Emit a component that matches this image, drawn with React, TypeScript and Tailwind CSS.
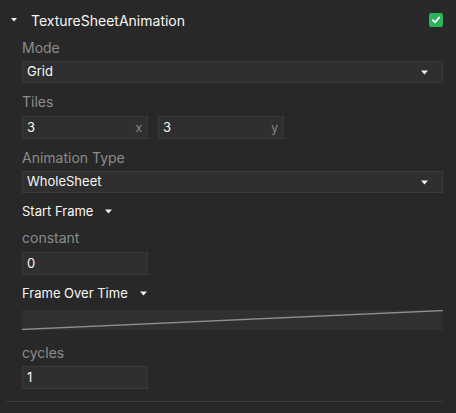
import React from "react";

const font = { fontFamily: "Inter, 'Liberation Sans', sans-serif" };

function Caret({ className = "" }: { className?: string }) {
  return (
    <svg width="7" height="5" viewBox="0 0 7 5" className={className}>
      <path d="M0 0.5 H7 L3.5 4.5 Z" fill="#f2f2f2" />
    </svg>
  );
}

function Label({ children, className = "" }: { children: React.ReactNode; className?: string }) {
  return <div className={`h-[17px] text-[14px] leading-[17px] text-[#8c8c8c] ${className}`}>{children}</div>;
}

function Select({ value, className = "" }: { value: string; className?: string }) {
  return (
    <div
      className={`flex h-[22px] w-[421px] items-center justify-between border border-[#3a3a3a] bg-[#2f2f2f] pl-[4px] pr-[14px] ${className}`}
    >
      <span className="text-[13px] text-[#f7f7f7]">{value}</span>
      <Caret />
    </div>
  );
}

function NumberField({ value, suffix, className = "" }: { value: string; suffix?: string; className?: string }) {
  return (
    <div
      className={`flex h-[23px] w-[126px] items-center justify-between border border-[#3a3a3a] bg-[#2f2f2f] pl-[4px] pr-[5px] ${className}`}
    >
      <span className="text-[13px] text-[#f7f7f7]">{value}</span>
      {suffix && <span className="text-[12px] text-[#8a8a8a]">{suffix}</span>}
    </div>
  );
}

function DropLabel({ text, className = "" }: { text: string; className?: string }) {
  return (
    <div className={`flex h-[16px] items-center gap-[12px] ${className}`}>
      <span className="text-[13px] leading-[16px] text-[#f7f7f7]">{text}</span>
      <Caret />
    </div>
  );
}

export default function App() {
  return (
    <div className="h-[413px] w-[456px] bg-[#282828]" style={font}>
      {/* module header */}
      <div className="flex h-[30px] items-end pl-[11px] pr-[13px]">
        <div className="flex h-[20px] w-full items-center justify-between">
          <div className="flex items-center gap-[14px]">
            <svg width="6" height="4" viewBox="0 0 6 4">
              <path d="M0 0 H6 L3 3.5 Z" fill="#f2f2f2" />
            </svg>
            <span className="text-[14px] text-[#f7f7f7]">TextureSheetAnimation</span>
          </div>
          <div className="flex h-[14px] w-[14px] items-center justify-center rounded-[2px] bg-[#2bb35c]">
            <svg width="10" height="10" viewBox="0 0 10 10">
              <path d="M1.8 5.2 L4 7.4 L8.3 2.4" stroke="#fff" strokeWidth="1.7" fill="none" strokeLinecap="round" strokeLinejoin="round" />
            </svg>
          </div>
        </div>
      </div>

      <div className="pl-[22px] pr-[13px]">
        <Label className="mt-[9px]">Mode</Label>
        <Select value="Grid" className="mt-[5px]" />

        <Label className="mt-[10px]">Tiles</Label>
        <div className="mt-[6px] flex gap-[10px]">
          <NumberField value="3" suffix="x" />
          <NumberField value="3" suffix="y" />
        </div>

        <Label className="mt-[10px]">Animation Type</Label>
        <Select value="WholeSheet" className="mt-[5px]" />

        <DropLabel text="Start Frame" className="mt-[10px]" />
        <Label className="mt-[10px]">constant</Label>
        <NumberField value="0" className="mt-[6px]" />

        <DropLabel text="Frame Over Time" className="mt-[10px]" />
        <div className="mt-[9px] h-[20px] w-[421px] bg-[#303030]">
          <svg width="421" height="20" viewBox="0 0 421 20" className="block">
            <line x1="0" y1="19.5" x2="421" y2="0.5" stroke="#8e8e8e" strokeWidth="1.3" />
          </svg>
        </div>

        <Label className="mt-[14px]">cycles</Label>
        <NumberField value="1" className="mt-[5px]" />
      </div>

      <div className="ml-[6px] mt-[12px] h-px w-[437px] bg-[#3c3c3c]" />
    </div>
  );
}
